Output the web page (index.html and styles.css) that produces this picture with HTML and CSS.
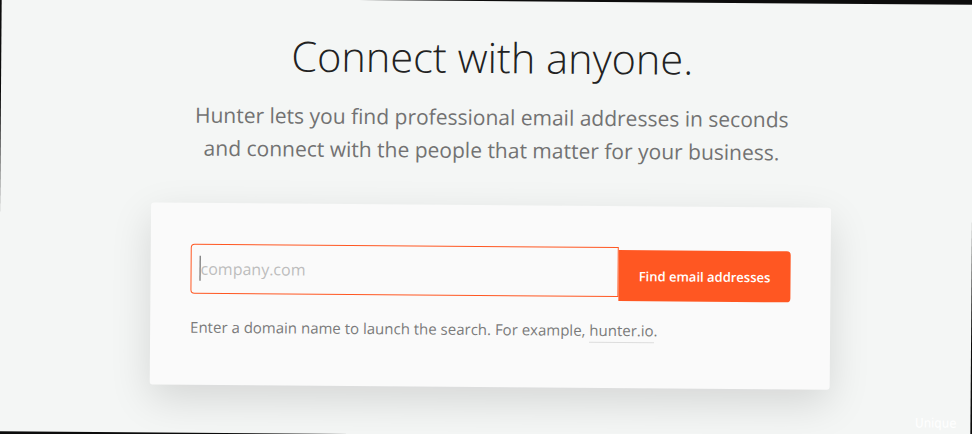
FILE: index.html
```html
<!DOCTYPE html>
<html lang="en">
<head>
  <meta charset="UTF-8">
  <meta name="viewport" content="width=device-width, initial-scale=1">
  <title>Hunter - Connect with anyone</title>
  <link rel="stylesheet" href="styles.css">
</head>
<body>
  <div class="page">
    <h1>Connect with anyone.</h1>
    <p class="lead">
      Hunter lets you find professional email addresses in seconds<br>
      and connect with the people that matter for your business.
    </p>

    <div class="card">
      <form class="search" onsubmit="return false">
        <div class="field">
          <input type="text" id="domain" placeholder="company.com">
        </div>
        <button type="submit">Find email addresses</button>
      </form>
      <p class="hint">Enter a domain name to launch the search. For example, <a href="#">hunter.io</a>.</p>
    </div>

    <div class="mark">Unique</div>
  </div>
</body>
</html>
```

FILE: styles.css
```css
html {
  background: #0c0c0c;
}
body {
  margin: 0;
  width: 972px;
  height: 434px;
  overflow: hidden;
  background: #f4f6f5;
  font-family: 'Open Sans', sans-serif;
  color: #222;
  transform: translateY(1px) rotate(0.45deg);
}
.page {
  position: relative;
  height: 100%;
  padding: 32px 0 0 10px;
  box-sizing: border-box;
  text-align: center;
}
h1 {
  margin: 0;
  font-size: 41.5px;
  font-weight: 300;
  line-height: 48px;
  color: #222;
}
.lead {
  margin: 20px 0 0;
  font-size: 21px;
  line-height: 33px;
  color: #727272;
}
.card {
  width: 680px;
  margin: 38px auto 0;
  padding: 41px 40px 47px;
  box-sizing: border-box;
  background: #fafafa;
  border-radius: 3px;
  box-shadow: 0 14px 40px rgba(0, 0, 0, 0.13);
  text-align: left;
}
.search {
  display: flex;
  align-items: flex-start;
}
.field {
  position: relative;
  flex: 1;
}
.field::before {
  content: '';
  position: absolute;
  left: 9px;
  top: 12px;
  height: 25px;
  border-left: 1px solid #555;
}
.field input {
  display: block;
  width: 100%;
  height: 50px;
  box-sizing: border-box;
  padding: 0 9px;
  border: 1px solid #ff5722;
  border-radius: 4px 0 0 4px;
  background: #fafafa;
  font-family: inherit;
  font-size: 16px;
  color: #333;
  outline: none;
}
.field input::placeholder {
  color: #bdbdbd;
}
.search button {
  width: 172px;
  height: 51px;
  margin-top: 3px;
  border: none;
  border-radius: 0 4px 4px 0;
  background: #ff5722;
  color: #fff;
  font-family: inherit;
  font-size: 13px;
  font-weight: 600;
  cursor: pointer;
}
.hint {
  margin: 18px 0 0;
  font-size: 15px;
  line-height: 22px;
  color: #7b7b7b;
}
.hint a {
  color: #7b7b7b;
  text-decoration: none;
  border-bottom: 1px solid #ddd;
  padding-bottom: 2px;
}
.mark {
  position: absolute;
  right: 14px;
  bottom: 8px;
  font-family: 'Liberation Sans Narrow', 'DejaVu Sans Condensed', sans-serif;
  font-size: 13px;
  color: #fff;
}
```
